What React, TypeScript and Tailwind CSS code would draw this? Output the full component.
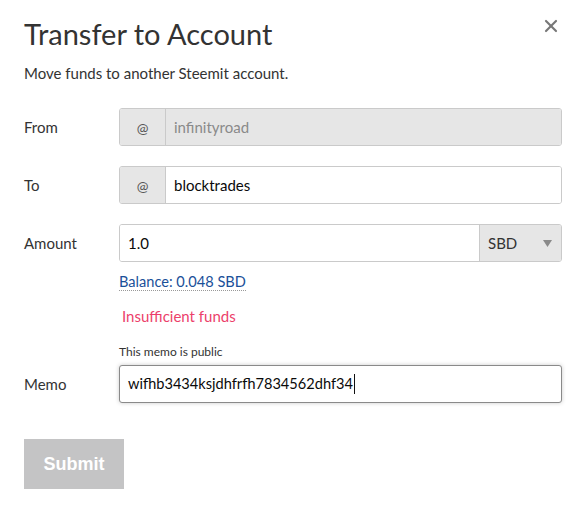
import { X } from "lucide-react";

const font = { fontFamily: "Lato, 'Noto Sans', sans-serif" };

function Row({ label, children }: { label: string; children: React.ReactNode }) {
  return <div className="flex items-center">
    <div className="w-[95px] shrink-0 text-[15px] text-[#333]">{label}</div>
    <div className="flex-1">{children}</div>
  </div>
}

function AtInput({ value, disabled }: { value: string; disabled?: boolean }) {
  return <div className="flex h-[38px] rounded-[3px] border border-[#cacaca] overflow-hidden">
    <div className="w-[46px] flex items-center justify-center bg-[#e6e6e6] border-r border-[#cacaca] text-[14px] text-[#555]">@</div>
    <div className={"flex-1 flex items-center px-2 text-[15px] " + (disabled ? "bg-[#e6e6e6] text-[#8a8a8a]" : "bg-white text-[#0a0a0a]")}>{value}</div>
  </div>
}

export default function App() {
  return <div className="w-[586px] h-[517px] bg-white relative pl-6 pr-6 pt-[15px]" style={font}>
    {/** close */}
    <button className="absolute top-[16px] right-[25px] text-[#777]">
      <X size={20} strokeWidth={2.6} />
    </button>
    {/** header */}
    <h3 className="text-[29px] leading-[38px] text-[#333]">Transfer to Account</h3>
    <p className="mt-[11px] text-[15px] leading-[18px] text-[#333]">Move funds to another Steemit account.</p>
    {/** form */}
    <div className="mt-[26px] w-[538px] flex flex-col">
      <Row label="From"><AtInput value="infinityroad" disabled /></Row>
      <div className="mt-[20px]"><Row label="To"><AtInput value="blocktrades" /></Row></div>
      <div className="mt-[20px]">
        <Row label="Amount">
          <div className="flex h-[38px] rounded-[3px] border border-[#cacaca] overflow-hidden">
            <div className="flex-1 flex items-center px-[8px] bg-white text-[15px] text-[#0a0a0a]">1.0</div>
            <div className="w-[82px] flex items-center justify-between pl-[8px] pr-[9px] bg-[#e6e6e6] border-l border-[#cacaca] text-[15px] text-[#333]">
              <span>SBD</span>
              <svg width="9" height="7" viewBox="0 0 9 7"><path d="M0 0h9L4.5 7z" fill="#8a8a8a" /></svg>
            </div>
          </div>
        </Row>
      </div>
      <div className="ml-[95px] mt-[11px] text-[14.6px] leading-[18px]">
        <span className="text-[#1a5099] border-b border-dotted border-[#999]">Balance: 0.048 SBD</span>
      </div>
      <div className="ml-[98px] mt-[16px] text-[15px] leading-[18px] text-[#ec3f6b]">Insufficient funds</div>
      <div className="ml-[95px] mt-[19px] text-[12px] leading-[16px] text-[#333]">This memo is public</div>
      <div className="mt-[5px]">
        <Row label="Memo">
          <div className="flex items-center h-[38px] rounded-[3px] border border-[#8a8a8a] shadow-[0_0_4px_#cacaca] bg-white px-[8px] text-[14.6px] text-[#0a0a0a]">
            wifhb3434ksjdhfrfh7834562dhf34<span className="inline-block w-px h-[20px] bg-[#111] ml-px" />
          </div>
        </Row>
      </div>
    </div>
    <button className="mt-[36px] w-[100px] h-[50px] bg-[#c4c4c5] text-white text-[18px] font-bold" style={{ fontFamily: "'Liberation Sans', Arial, sans-serif" }}>Submit</button>
  </div>
}
